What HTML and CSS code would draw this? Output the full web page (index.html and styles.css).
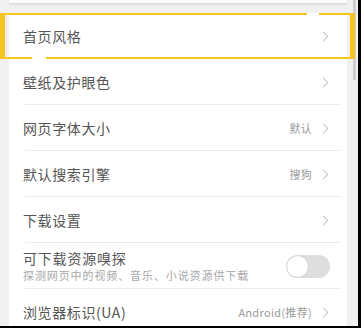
FILE: index.html
```html
<!DOCTYPE html>
<html lang="zh-CN">
<head>
    <meta charset="UTF-8">
    <meta name="viewport" content="width=device-width, initial-scale=1.0">
    <title>设置</title>
    <link rel="stylesheet" href="styles.css">
</head>
<body>
    <div class="screen">
        <div class="scroll-area">
            <!-- previous card peeking in at the top -->
            <div class="card card-top"></div>

            <div class="card settings">
                <div class="row">
                    <span class="label">首页风格</span>
                    <span class="chevron"></span>
                </div>
                <div class="row">
                    <span class="label">壁纸及护眼色</span>
                    <span class="chevron"></span>
                </div>
                <div class="row">
                    <span class="label">网页字体大小</span>
                    <span class="value">默认</span>
                    <span class="chevron"></span>
                </div>
                <div class="row">
                    <span class="label">默认搜索引擎</span>
                    <span class="value">搜狗</span>
                    <span class="chevron"></span>
                </div>
                <div class="row">
                    <span class="label">下载设置</span>
                    <span class="chevron"></span>
                </div>
                <div class="row row-tall">
                    <div class="label-group">
                        <span class="label">可下载资源嗅探</span>
                        <span class="sub">探测网页中的视频、音乐、小说资源供下载</span>
                    </div>
                    <span class="toggle"><span class="knob"></span></span>
                </div>
                <div class="row">
                    <span class="label">浏览器标识(UA)</span>
                    <span class="value">Android(推荐)</span>
                    <span class="chevron"></span>
                </div>
            </div>
        </div>

        <!-- scrollbar thumb and focus highlight drawn over content -->
        <div class="scroll-thumb"></div>
        <div class="focus-ring">
            <span class="gap gap-top"></span>
            <span class="gap gap-bottom"></span>
        </div>
    </div>
</body>
</html>
```

FILE: styles.css
```css
* {
    box-sizing: border-box;
}

body {
    margin: 0;
    font-family: "Noto Sans CJK SC", "Noto Sans", sans-serif;
    background-color: #000;
}

/* Screen */
.screen {
    position: relative;
    width: 358px;
    height: 326px;
    overflow: hidden;
    background-color: #f1f1f1;
}

.scroll-area {
    padding: 0 11px 0 9px;
}

/* Cards */
.card {
    background-color: #fff;
}

.card-top {
    height: 3px;
    box-shadow: 0 1px 3px rgba(0, 0, 0, 0.15);
    margin-bottom: 10px;
}

.settings {
    display: flex;
    flex-direction: column;
}

/* Rows */
.row {
    display: flex;
    align-items: center;
    height: 46px;
    padding: 0 18px 0 14px;
    position: relative;
}

.row::after {
    content: "";
    position: absolute;
    left: 16px;
    right: 7px;
    bottom: 0;
    height: 1px;
    background-color: #ececec;
}

.row:last-child::after {
    display: none;
}

.label {
    font-size: 14px;
    letter-spacing: 0.6px;
    color: #555;
    flex: 1;
}

.label-group {
    flex: 1;
    display: flex;
    flex-direction: column;
    margin-top: -2px;
}

.label-group .label {
    line-height: 18px;
    letter-spacing: 0.8px;
}

.sub {
    font-size: 11px;
    letter-spacing: 0.9px;
    color: #a8a8a8;
    line-height: 14px;
    margin-top: 1px;
}

.value {
    font-size: 11px;
    letter-spacing: 0.3px;
    color: #9a9a9a;
    margin-right: 8px;
}

.chevron {
    width: 7px;
    height: 7px;
    border-top: 1.2px solid #c4c4c4;
    border-right: 1.2px solid #c4c4c4;
    transform: rotate(45deg);
    margin-right: 2px;
}

/* Toggle */
.toggle {
    width: 44px;
    height: 23px;
    border-radius: 12px;
    background-color: #dedede;
    padding: 1px;
    margin-right: -1px;
    display: flex;
}

.knob {
    width: 21px;
    height: 21px;
    border-radius: 50%;
    background-color: #fff;
    box-shadow: 0 0 1px rgba(0, 0, 0, 0.2);
}

/* Scrollbar */
.scroll-thumb {
    position: absolute;
    top: 0;
    right: 2px;
    width: 3px;
    height: 80px;
    background-color: #cfcfcf;
}

/* Focus highlight */
.focus-ring {
    position: absolute;
    top: 13px;
    left: 0;
    width: 355px;
    height: 46px;
    border: 2px solid #f7c520;
    border-left-width: 5px;
    border-right-width: 5px;
}

.gap {
    position: absolute;
    height: 2px;
    background-color: #fff;
}

.gap-top {
    top: -2px;
    left: 302px;
    width: 12px;
}

.gap-bottom {
    bottom: -2px;
    left: 27px;
    width: 14px;
}
```
